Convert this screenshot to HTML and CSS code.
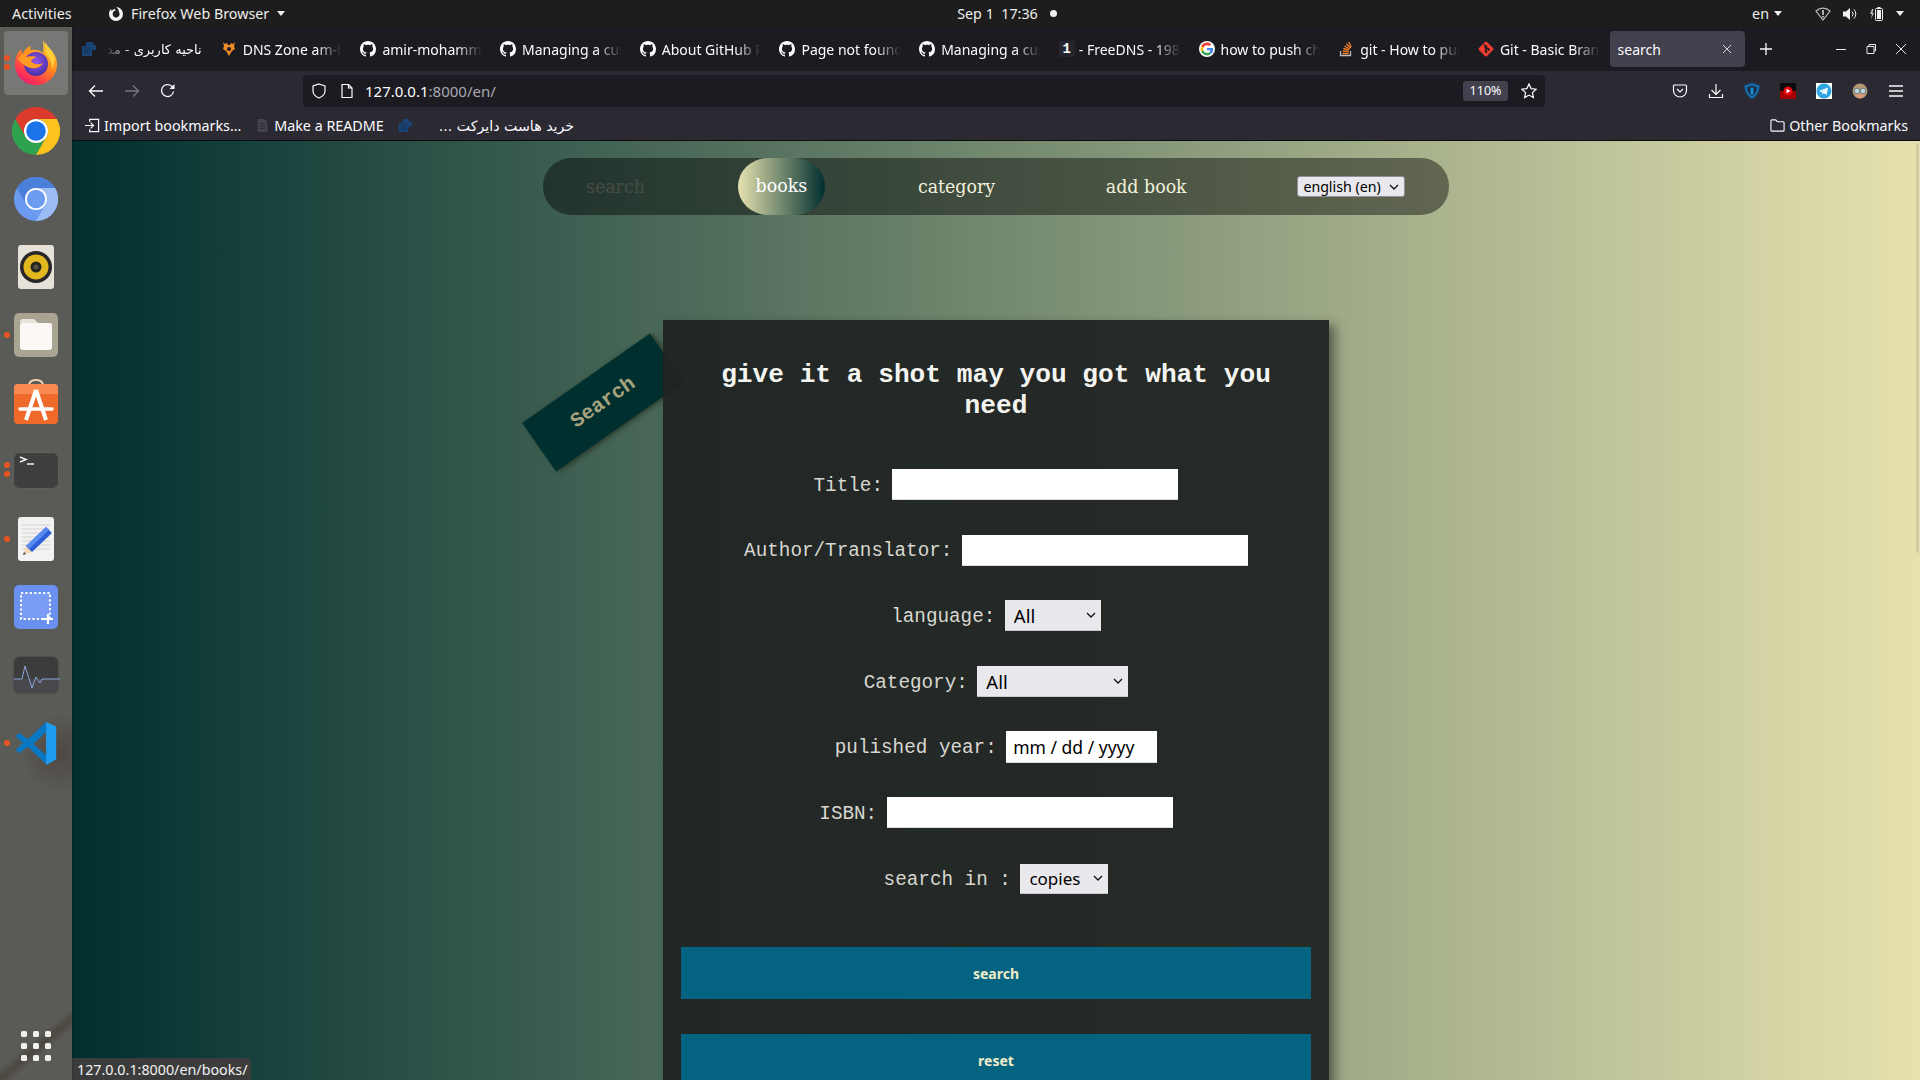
FILE: index.html
```html
<!DOCTYPE html>
<html lang="en">
<head>
<meta charset="utf-8">
<title>search</title>
<link rel="stylesheet" href="styles.css">
</head>
<body>
<svg class="defs" width="0" height="0" aria-hidden="true">
  <symbol id="gh" viewBox="0 0 16 16"><path fill="#fbfbfe" d="M8 0C3.58 0 0 3.58 0 8c0 3.54 2.29 6.53 5.47 7.59.4.07.55-.17.55-.38 0-.19-.01-.82-.01-1.49-2.01.37-2.53-.49-2.69-.94-.09-.23-.48-.94-.82-1.13-.28-.15-.68-.52-.01-.53.63-.01 1.08.58 1.23.82.72 1.21 1.87.87 2.33.66.07-.52.28-.87.51-1.07-1.78-.2-3.64-.89-3.64-3.95 0-.87.31-1.59.82-2.15-.08-.2-.36-1.02.08-2.12 0 0 .67-.21 2.2.82.64-.18 1.32-.27 2-.27.68 0 1.36.09 2 .27 1.53-1.04 2.2-.82 2.2-.82.44 1.1.16 1.92.08 2.12.51.56.82 1.27.82 2.15 0 3.07-1.87 3.75-3.65 3.95.29.25.54.73.54 1.48 0 1.07-.01 1.93-.01 2.2 0 .21.15.46.55.38A8.013 8.013 0 0016 8c0-4.42-3.58-8-8-8z"/></symbol>
  <symbol id="bluedoc" viewBox="0 0 16 16"><path fill="#1a4474" d="M5 1h7v3h3v5h-4v6H1V5h4z"/><path stroke="#0f2f55" stroke-width="1" d="M3 7h6M3 9.500h6M3 12h6"/></symbol>
</svg>

<div class="desktop">
  <header class="topbar">
    <div class="top-left">
      <span class="activities">Activities</span>
      <span class="app-menu">
        <svg class="ico16" viewBox="0 0 16 16"><path fill="#f4f4f4" d="M8 1a7 7 0 1 1-7 7c0-2 .8-3.700 2-5l.5 2C5 3.500 6 3 7 2.500 6.500 3.500 7 4 8 4.500a3.500 3.500 0 1 0 3 1.500C10.500 3.500 9.500 2 8 1z"/></svg>
        Firefox Web Browser <i class="caret"></i>
      </span>
    </div>
    <div class="top-center">Sep 1&nbsp; 17:36 <i class="rec-dot"></i></div>
    <div class="top-right">
      <span class="lang">en <i class="caret"></i></span>
      <svg class="ico16 wifi" viewBox="0 0 16 16"><path fill="none" stroke="#bbb" stroke-width="1.200" d="M1 5a10 10 0 0 1 14 0L8 14z"/><path fill="#eee" d="M7.300 4h1.400v5H7.300zM7.300 10h1.400v1.400H7.300z"/></svg>
      <svg class="ico16" viewBox="0 0 16 16"><path fill="#f2f2f2" d="M1 5.500h3L8 2v12L4 10.500H1z"/><path fill="none" stroke="#f2f2f2" d="M10 5.500a3.500 3.500 0 0 1 0 5M12 3.500a6.500 6.500 0 0 1 0 9"/></svg>
      <svg class="ico16" viewBox="0 0 16 16"><path fill="#bbb" d="M3 3 1 8h2l-1 5 3-6H3.500l1-4z"/><rect x="6.500" y="2.500" width="7" height="12" rx="1" fill="none" stroke="#f2f2f2"/><rect x="8.500" y="1" width="3" height="1.500" fill="#f2f2f2"/><rect x="8" y="4" width="4" height="9" fill="#f2f2f2"/></svg>
      <i class="caret"></i>
    </div>
  </header>

  <aside class="dock">
    <div class="dock-item dock-active">
      <i class="pip pip-a"></i><i class="pip pip-b"></i>
      <svg class="dock-ico" viewBox="0 0 48 48">
        <defs>
          <linearGradient id="fxa" x1="0.800" y1="0" x2="0.200" y2="1"><stop offset="0" stop-color="#ffd83a"/><stop offset=".45" stop-color="#ff8a1e"/><stop offset=".8" stop-color="#ff3750"/><stop offset="1" stop-color="#e3147c"/></linearGradient>
          <radialGradient id="fxb" cx=".5" cy=".4" r=".6"><stop offset="0" stop-color="#8d55e8"/><stop offset="1" stop-color="#4b2fa8"/></radialGradient>
        </defs>
        <path fill="url(#fxa)" d="M31 0c1 5 4 7 8 11 4 4 6 9 6 14 0 12-9 21-21 21S3 37 3 25c0-6 2-11 6-15 0 2 1 4 2 5 1-4 4-7 8-8-1 1-1 3 0 4 4-1 9 0 12 3 1-5 0-10 0-14z"/>
        <circle cx="24" cy="25" r="12" fill="url(#fxb)"/>
        <path fill="#ff9a24" d="M6 20c4-6 9-8 13-7-3 1-5 3-5 5 3-1 8-1 11 0-3 1-5 2-6 4 3 4 8 4 12 2-2 4-7 6-12 5-5-1-9-4-13-9z"/>
        <path fill="#ffcf3a" d="M33 3c2 4 6 7 8 11 2 5 2 11-1 16 0-7-2-12-6-15 0-4 0-8-1-12z"/>
      </svg>
    </div>
    <div class="dock-item">
      <svg class="dock-ico" viewBox="0 0 48 48">
        <path fill="#db3a2c" d="M24 0C15.100 0 7.400 4.800 3.200 12L13.600 30A12 12 0 0 1 24 12h20.800C40.600 4.800 32.900 0 24 0z"/>
        <path fill="#2fa24e" d="M3.200 12A24 24 0 0 0 24 48L34.400 30A12 12 0 0 1 13.600 30z"/>
        <path fill="#fcc31e" d="M44.800 12H24a12 12 0 0 1 10.400 18L24 48A24 24 0 0 0 44.800 12z"/>
        <circle cx="24" cy="24" r="12" fill="#fff"/><circle cx="24" cy="24" r="9.800" fill="#1a73e8"/>
      </svg>
    </div>
    <div class="dock-item">
      <svg class="dock-ico dock-ico-44" viewBox="0 0 48 48">
        <circle cx="24" cy="24" r="24" fill="#6a9bf0"/>
        <path fill="#4a7fdc" d="M24 0C15.100 0 7.400 4.800 3.200 12L13.600 30A12 12 0 0 1 24 12h20.800C40.600 4.800 32.900 0 24 0z"/>
        <path fill="#9cbcf6" d="M44.800 12H24a12 12 0 0 1 10.400 18L24 48A24 24 0 0 0 44.800 12z"/>
        <circle cx="24" cy="24" r="12" fill="#fff"/><circle cx="24" cy="24" r="10" fill="#6b9cf0"/>
      </svg>
    </div>
    <div class="dock-item">
      <svg class="dock-ico" viewBox="0 0 48 48">
        <rect x="6" y="2" width="36" height="44" rx="3" fill="#e6e2d8"/>
        <circle cx="24" cy="24" r="16" fill="#27262a"/><circle cx="24" cy="24" r="12.500" fill="#e3b81e"/><circle cx="24" cy="24" r="5.500" fill="#26241f"/><circle cx="24" cy="24" r="2.500" fill="#55503f"/>
      </svg>
    </div>
    <div class="dock-item">
      <i class="pip pip-c"></i>
      <svg class="dock-ico" viewBox="0 0 48 48">
        <rect x="2" y="2" width="44" height="44" rx="5" fill="#a9a392"/>
        <path fill="#e8e4dc" d="M8 11q0-3 3-3h11l4 4H8z"/>
        <path fill="#fbf8f5" d="M8 14q0-2 2-2h28q2 0 2 2v22q0 3-3 3H11q-3 0-3-3z"/>
      </svg>
    </div>
    <div class="dock-item">
      <svg class="dock-ico" viewBox="0 0 48 48">
        <path fill="none" stroke="#f6d4b8" stroke-width="2" d="M17 7q0-6 7-6t7 6v3"/>
        <rect x="2" y="5" width="44" height="40" rx="4" fill="#ef6a2a"/>
        <path fill="#f98a50" d="M2 9q0-4 4-4h36q4 0 4 4v6H2z"/>
        <path fill="none" stroke="#fff" stroke-width="4" d="M24 11 14 41M24 11l10 30"/>
        <path fill="none" stroke="#fff" stroke-width="3.500" stroke-linecap="round" d="M8 30h32"/>
      </svg>
    </div>
    <div class="dock-item">
      <i class="pip pip-a2"></i><i class="pip pip-b2"></i>
      <svg class="dock-ico" viewBox="0 0 48 48">
        <rect x="1.500" y="5.500" width="45" height="36" rx="6" fill="#413f3e" stroke="#606060"/>
        <path fill="none" stroke="#f1f1f1" stroke-width="1.500" d="M8 10l6 2.500L8 15M15 17h7"/>
      </svg>
    </div>
    <div class="dock-item">
      <i class="pip pip-c"></i>
      <svg class="dock-ico" viewBox="0 0 48 48">
        <rect x="6" y="2" width="36" height="44" rx="3" fill="#f2f2f2"/>
        <path stroke="#d2d2d2" d="M10 10h28M10 14h28M10 18h28M10 22h28M10 26h28M10 30h28M10 34h28"/>
        <path fill="#f4d9b8" d="M11 40l3-9 6 6z"/><path fill="#444" d="M11 40l1-3 2 2z"/>
        <path fill="#2c5fd8" d="M14 31 34 12l6 6-20 19z"/><path fill="#5b8af0" d="M14 31 34 12l3 3-20 19z"/>
      </svg>
    </div>
    <div class="dock-item">
      <svg class="dock-ico" viewBox="0 0 48 48">
        <rect x="2" y="2" width="44" height="44" rx="5" fill="#6a90f0"/>
        <rect x="9" y="10" width="29" height="26" fill="#7a9cf5" stroke="#fff" stroke-width="2" stroke-dasharray="2.200 2.200"/>
        <path stroke="#fff" stroke-width="2.200" d="M31 36h10M36 31v10"/>
      </svg>
    </div>
    <div class="dock-item">
      <svg class="dock-ico" viewBox="0 0 48 48">
        <rect x="1.500" y="5.500" width="45" height="37" rx="6" fill="#3c3c3c" stroke="#4f4f4f"/>
        <path fill="#47474c" d="M2 28h44v9q0 5-5 5H7q-5 0-5-5z"/>
        <path fill="none" stroke="#8ca6dc" stroke-width="1" d="M2 28h8l3-13 7 22 4-11 4 6 2-4h18"/>
      </svg>
    </div>
    <div class="dock-item">
      <i class="pip pip-c"></i>
      <svg class="dock-ico dock-ico-44" viewBox="0 0 48 48">
        <path fill="#0a77c2" d="M35 1 15 20 6 13 2 16v1l8 7-8 7v1l4 3 9-7 20 19 0-10-14-12L35 12z"/>
        <path fill="#1f9cf0" d="M35 1l11 5v36l-11 6z"/>
      </svg>
    </div>
    <div class="dock-apps">
      <i></i><i></i><i></i><i></i><i></i><i></i><i></i><i></i><i></i>
    </div>
  </aside>

  <main class="browser">
    <div class="tabstrip">
      <div class="tab"><svg class="ico16"><use href="#bluedoc"/></svg><span class="tab-title tab-rtl" dir="rtl">ناحیه کاربری - مدیریت هاست</span></div>
      <div class="tab">
        <svg class="ico16" viewBox="0 0 16 16"><path fill="#f08a24" d="M2 1l2 2 2-1 1 2h2l1-2 2 1 2-2-1 4 1 3-3 2-3 5-3-5-3-2 1-3z"/><circle cx="8" cy="8" r="2" fill="#1c1b22"/></svg>
        <span class="tab-title">DNS Zone am-h.ir</span></div>
      <div class="tab"><svg class="ico16"><use href="#gh"/></svg><span class="tab-title">amir-mohammad</span></div>
      <div class="tab"><svg class="ico16"><use href="#gh"/></svg><span class="tab-title">Managing a custom</span></div>
      <div class="tab"><svg class="ico16"><use href="#gh"/></svg><span class="tab-title">About GitHub Pages</span></div>
      <div class="tab"><svg class="ico16"><use href="#gh"/></svg><span class="tab-title">Page not found</span></div>
      <div class="tab"><svg class="ico16"><use href="#gh"/></svg><span class="tab-title">Managing a custom</span></div>
      <div class="tab tab-num"><span class="num-tile">1</span><span class="tab-title">- FreeDNS - 1984</span></div>
      <div class="tab">
        <svg class="ico16 g-ico" viewBox="-6 -6 60 60"><circle cx="24" cy="24" r="30" fill="#fff"/><path fill="#EA4335" d="M24 9.500c3.540 0 6.710 1.220 9.210 3.600l6.850-6.850C35.900 2.380 30.470 0 24 0 14.620 0 6.510 5.380 2.560 13.220l7.980 6.190C12.430 13.720 17.740 9.500 24 9.500z"/><path fill="#4285F4" d="M46.980 24.550c0-1.570-.15-3.090-.38-4.550H24v9.020h12.940c-.58 2.960-2.260 5.480-4.780 7.180l7.730 6c4.510-4.180 7.090-10.360 7.090-17.650z"/><path fill="#FBBC05" d="M10.530 28.590c-.48-1.450-.76-2.990-.76-4.590s.27-3.140.76-4.590l-7.980-6.190C.92 16.460 0 20.120 0 24c0 3.880.92 7.540 2.560 10.780l7.970-6.190z"/><path fill="#34A853" d="M24 48c6.480 0 11.930-2.130 15.890-5.810l-7.730-6c-2.150 1.450-4.920 2.300-8.160 2.300-6.260 0-11.570-4.220-13.470-9.910l-7.980 6.190C6.510 42.620 14.620 48 24 48z"/></svg>
        <span class="tab-title">how to push changes</span></div>
      <div class="tab">
        <svg class="ico16" viewBox="0 0 16 16"><path fill="none" stroke="#bcbbbb" stroke-width="1.300" d="M2.500 10v4.500h10V10"/><path fill="none" stroke="#f48024" stroke-width="1.300" d="M4.500 12.500h6M4.700 10l6 .6M5.300 7.500l5.800 1.600M6.500 5l5.200 3M8.400 2.800l4.200 4.300M10.800 1l2.400 5.300"/></svg>
        <span class="tab-title">git - How to push</span></div>
      <div class="tab">
        <svg class="ico16" viewBox="0 0 16 16"><rect x="2.300" y="2.300" width="11.400" height="11.400" rx="1.500" fill="#f03c2e" transform="rotate(45 8 8)"/><path stroke="#1c1b22" stroke-width="1.200" d="M6 3.500 8 5.500v5M8 6l2.500 2.500"/><circle cx="8" cy="5.800" r="1.200" fill="#1c1b22"/><circle cx="8" cy="10.800" r="1.200" fill="#1c1b22"/><circle cx="10.500" cy="8.500" r="1.200" fill="#1c1b22"/></svg>
        <span class="tab-title">Git - Basic Branching</span></div>
      <div class="tab tab-active"><span class="active-title">search</span>
        <svg class="tab-x" viewBox="0 0 10 10"><path stroke="#d8d8dc" stroke-width="1" d="M1 1l8 8M9 1l-8 8"/></svg></div>
      <svg class="new-tab" viewBox="0 0 12 12"><path stroke="#fbfbfe" stroke-width="1.300" d="M6 0v12M0 6h12"/></svg>
      <div class="win-ctrls">
        <svg class="ico12" viewBox="0 0 12 12"><path stroke="#e8e8e8" d="M1 6.500h10"/></svg>
        <svg class="ico12" viewBox="0 0 12 12"><path fill="none" stroke="#e8e8e8" d="M2 3.500h7v7H2zM4 3.500V1.500h6.500V8H9"/></svg>
        <svg class="ico12" viewBox="0 0 12 12"><path stroke="#e8e8e8" d="M1 1l10 10M11 1L1 11"/></svg>
      </div>
    </div>

    <div class="toolbar">
      <div class="nav-btns">
        <svg class="ico16" viewBox="0 0 16 16"><path fill="none" stroke="#fbfbfe" stroke-width="1.300" d="M15 8H1.500M7 2.500 1.500 8 7 13.500"/></svg>
        <svg class="ico16" viewBox="0 0 16 16"><path fill="none" stroke="#77767c" stroke-width="1.300" d="M1 8h13.500M9 2.500 14.500 8 9 13.500"/></svg>
        <svg class="ico16" viewBox="0 0 16 16"><path fill="none" stroke="#fbfbfe" stroke-width="1.300" d="M13.500 8.500A6 6 0 1 1 11.500 3l2.500 2"/><path fill="#fbfbfe" d="M14.500 1v5h-5z"/></svg>
      </div>
      <div class="urlbar">
        <svg class="ico16" viewBox="0 0 16 16"><path fill="none" stroke="#fbfbfe" stroke-width="1.200" d="M8 1l6 2v5c0 3-2.500 5.500-6 7-3.500-1.500-6-4-6-7V3z"/></svg>
        <svg class="ico16" viewBox="0 0 16 16"><path fill="none" stroke="#fbfbfe" stroke-width="1.200" d="M3 1.500h6.500L13 5v9.500H3zM9.500 1.500V5H13"/></svg>
        <span class="url"><b>127.0.0.1</b>:8000/en/</span>
        <span class="zoom-badge">110%</span>
        <svg class="ico16 star" viewBox="0 0 16 16"><path fill="none" stroke="#fbfbfe" stroke-width="1.200" d="M8 1l2.100 4.600 5 .6-3.700 3.400 1 5L8 12.100l-4.400 2.500 1-5L.9 6.200l5-.6z"/></svg>
      </div>
      <div class="tool-icons">
        <svg class="ico16" viewBox="0 0 16 16"><path fill="none" stroke="#fbfbfe" stroke-width="1.200" d="M2.500 2h11q1 0 1 1v4.500a6.500 6.500 0 0 1-13 0V3q0-1 1-1zM5 6l3 3 3-3"/></svg>
        <svg class="ico16" viewBox="0 0 16 16"><path fill="none" stroke="#fbfbfe" stroke-width="1.200" d="M8 1v10M3.500 7 8 11.500 12.500 7M1.500 11v3.500h13V11"/></svg>
        <svg class="ico16 ico-big" viewBox="0 0 16 16"><path fill="#1070b0" d="M8 0l7.500 2.500C15.500 8 13 13 8 16 3 13 .5 8 .5 2.500z"/><path fill="#1c3048" d="M8 2.500l5 1.700C13 8 11 11.500 8 13.500 5 11.500 3 8 3 4.200z"/><path fill="#1a86cc" d="M6.500 4.500h3V11L8 12.500 6.500 11z"/></svg>
        <svg class="ico16" viewBox="0 0 16 16"><rect width="16" height="16" rx="1" fill="#0b0b0b"/><path fill="#a30006" d="M0 8h16v7q0 1-1 1H1q-1 0-1-1z"/><circle cx="8" cy="8" r="4.500" fill="#e60914"/><path fill="#fff" d="M6.500 5.800 10.500 8l-4 2.200z"/></svg>
        <svg class="ico16" viewBox="0 0 16 16"><rect width="16" height="16" fill="#fff"/><circle cx="8" cy="8" r="7.500" fill="#2ca5e0"/><path fill="#fff" d="M3 8l9-3.500-1.500 7.500-2.800-2-1.400 1.400-.3-2.400L10.500 6 5 8.900z"/></svg>
        <svg class="ico16" viewBox="0 0 16 16"><circle cx="8" cy="8" r="7.500" fill="#b39a72"/><path fill="#d89a78" d="M3 9h10q0 6-5 6.500Q3 15 3 9z"/><circle cx="5" cy="8" r="2.800" fill="#bcd6de" stroke="#6c7c84"/><circle cx="11" cy="8" r="2.800" fill="#bcd6de" stroke="#6c7c84"/></svg>
        <svg class="ico16" viewBox="0 0 16 16"><path stroke="#fbfbfe" stroke-width="1.300" d="M1 3h14M1 8h14M1 13h14"/></svg>
      </div>
    </div>

    <div class="bookmarks">
      <span class="bm">
        <svg class="ico14" viewBox="0 0 16 16"><path fill="none" stroke="#fbfbfe" stroke-width="1.300" d="M5 4V1.500h9.500v13H5V12M0 8h9M6 5l3 3-3 3"/></svg>Import bookmarks…</span>
      <span class="bm">
        <svg class="ico14" viewBox="0 0 16 16"><path fill="#45444b" d="M3 1h7l3 3v11H3z"/><path stroke="#2b2a33" d="M5 6h6M5 8.500h6M5 11h6"/></svg>Make a README</span>
      <svg class="ico14" ><use href="#bluedoc"/></svg>
      <span class="bm bm-fa" dir="rtl">خرید هاست دایرکت ...</span>
      <span class="bm bm-other">
        <svg class="ico14" viewBox="0 0 16 16"><path fill="none" stroke="#fbfbfe" stroke-width="1.200" d="M1 3q0-1 1-1h4l2 2h6q1 0 1 1v8q0 1-1 1H2q-1 0-1-1z"/></svg>Other Bookmarks</span>
    </div>

    <div class="page">
      <nav class="site-nav">
        <a class="nav-link nav-dim">search</a>
        <a class="nav-link nav-current">books</a>
        <a class="nav-link">category</a>
        <a class="nav-link">add book</a>
        <select class="lang-select"><option>english (en)</option></select>
      </nav>

      <section class="card-wrap">
        <div class="ribbon">Search</div>
        <form class="card">
          <h1 class="card-title">give it a shot may you got what you need</h1>
          <div class="rows">
            <div class="row"><label class="row-label">Title:</label><input class="field" type="text"></div>
            <div class="row"><label class="row-label">Author/Translator:</label><input class="field" type="text"></div>
            <div class="row"><label class="row-label">language:</label><select class="pick pick-lang"><option>All</option></select></div>
            <div class="row"><label class="row-label">Category:</label><select class="pick pick-cat"><option>All</option></select></div>
            <div class="row"><label class="row-label">pulished year:</label><input class="field field-date" type="text" value="mm / dd / yyyy"></div>
            <div class="row"><label class="row-label">ISBN:</label><input class="field" type="text"></div>
            <div class="row"><label class="row-label">search in :</label><select class="pick pick-in"><option>copies</option></select></div>
          </div>
          <button class="action" type="button">search</button>
          <button class="action" type="button">reset</button>
        </form>
      </section>

      <div class="scroll-thumb"></div>
      <div class="status">127.0.0.1:8000/en/books/</div>
    </div>
  </main>
</div>
</body>
</html>
```
FILE: styles.css
```css
* { box-sizing: border-box; }
html, body { margin: 0; height: 100%; overflow: hidden; }
body { font-family: "Noto Sans", "DejaVu Sans", sans-serif; background: #111; }
.defs { position: absolute; }

.desktop {
  width: 1920px; height: 1080px;
  display: grid;
  grid-template-columns: 72px 1fr;
  grid-template-rows: 27px 1fr;
}

/* top bar */
.topbar {
  grid-column: 1 / 3;
  background: #1d1d1d;
  color: #eeeeec;
  font-size: 14.300px;
  display: grid;
  grid-template-columns: 1fr auto 1fr;
  align-items: center;
  padding: 0 16px 0 12px;
}
.top-left { display: flex; align-items: center; }
.activities { width: 96px; }
.app-menu { display: flex; align-items: center; gap: 7px; white-space: nowrap; }
.top-center { display: flex; align-items: center; gap: 12px; padding-left: 102px; padding-right: 4px; }
.rec-dot { width: 7px; height: 7px; border-radius: 50%; background: #eee; }
.top-right { display: flex; align-items: center; justify-content: flex-end; gap: 11px; }
.lang { display: flex; align-items: center; gap: 5px; margin-right: 22px; }
.caret { display: inline-block; width: 0; height: 0; border: 4.500px solid transparent; border-top: 5px solid #eee; border-bottom: 0; }
.app-menu .caret { margin-left: 1px; }
.ico16 { width: 16px; height: 16px; flex: none; }
.ico14 { width: 15px; height: 15px; flex: none; }
.ico12 { width: 12px; height: 12px; flex: none; }

/* dock */
.dock {
  background:
    radial-gradient(40px 40px at 60px 726px, rgba(60,45,35,.4), transparent),
    linear-gradient(140deg, transparent 0 93.500%, rgba(60,48,35,.45) 94.500%, transparent 95.500%),
    #5a5a57;
  padding-top: 2px;
  display: flex;
  flex-direction: column;
  align-items: center;
  box-shadow: 1px 0 2px rgba(0,0,0,.2);
  z-index: 3;
}
.dock-item { position: relative; flex: none; width: 64px; height: 64px; margin: 2px 0; display: flex; align-items: center; justify-content: center; border-radius: 4px; }
.dock-active { background: #777775; }
.dock-ico { width: 48px; height: 48px; }
.dock-ico-44 { width: 44px; height: 44px; }
.pip { position: absolute; left: 0; width: 6px; height: 6px; border-radius: 50%; background: #e95420; }
.pip-a { top: 24px; }
.pip-b { top: 33px; }
.pip-a2 { top: 23px; }
.pip-b2 { top: 32px; }
.pip-c { top: 29px; }
.dock-apps { margin-top: auto; margin-bottom: 19px; display: grid; grid-template-columns: repeat(3, 6px); gap: 6px; }
.dock-apps i { width: 6px; height: 6px; border-radius: 1.500px; background: #f0f0ee; }

/* browser chrome */
.browser { display: flex; flex-direction: column; min-width: 0; min-height: 0; }
.tabstrip { height: 44px; flex: none; background: #1c1b22; display: flex; align-items: center; padding-left: 1px; color: #fbfbfe; font-size: 14px; }
.tab { width: 139.700px; flex: none; height: 36px; padding: 0 8px; display: flex; align-items: center; gap: 6px; }
.tab-title { flex: 1; min-width: 0; overflow: hidden; white-space: nowrap; -webkit-mask-image: linear-gradient(to right, #000 72%, transparent 98%); mask-image: linear-gradient(to right, #000 72%, transparent 98%); }
.tab-rtl { font-family: "DejaVu Sans", sans-serif; font-size: 13px; padding-right: 3px; -webkit-mask-image: linear-gradient(to left, #000 72%, transparent 98%); mask-image: linear-gradient(to left, #000 72%, transparent 98%); }
.tab-num { gap: 4px; }
.num-tile { width: 16px; height: 16px; background: #26252b; font: bold 14px/16px "Liberation Mono", monospace; text-align: center; flex: none; }
.tab-active { width: 135px; background: #42414d; border-radius: 4px; justify-content: space-between; padding-right: 13px; }
.tab-x { width: 10px; height: 10px; }
.new-tab { width: 12px; height: 12px; margin-left: 15px; flex: none; }
.win-ctrls { margin-left: auto; display: flex; gap: 18px; padding-right: 13px; }

.toolbar { height: 36px; flex: none; background: #2b2a33; display: flex; align-items: flex-end; color: #fbfbfe; }
.nav-btns { width: 231px; flex: none; height: 32px; display: flex; align-items: center; gap: 20px; padding-left: 16px; }
.urlbar { width: 1242px; flex: none; height: 32px; background: #1c1b22; border-radius: 4px; display: flex; align-items: center; padding: 0 8px; gap: 12px; font-size: 15px; }
.url { color: #a9a9b0; flex: 1; margin-left: -2px; }
.url b { color: #fbfbfe; font-weight: 400; }
.zoom-badge { width: 45px; height: 20px; line-height: 20px; text-align: center; background: #42414d; border-radius: 3px; font-size: 12.500px; margin-right: 1px; }
.tool-icons { flex: 1; height: 32px; display: flex; align-items: center; justify-content: space-between; padding: 0 16px 0 127px; }

.bookmarks { height: 34px; flex: none; background: #2b2a33; border-bottom: 1px solid #0c0c0d; display: flex; align-items: center; padding: 4px 0 0 13px; color: #fbfbfe; font-size: 14.300px; }
.bm { display: flex; align-items: center; gap: 4px; white-space: nowrap; }
.bm + .bm { margin-left: 14px; }
.bm + .ico14 { margin-left: 14px; }
.ico14 + .bm-fa { margin-left: 26px; font-family: "DejaVu Sans", sans-serif; font-size: 14.200px; }
.bm-other { margin-left: auto !important; padding-right: 12px; }

/* web page */
.page {
  flex: 1; min-height: 0;
  position: relative;
  overflow: hidden;
  background: linear-gradient(to right, #002f2f, #e6e2af);
  padding-top: 17px;
}
.site-nav {
  width: 906px; height: 57px; margin: 0 auto;
  background: rgba(0,0,0,.43);
  border-radius: 28px;
  padding: 0 25px;
  display: flex;
  align-items: center;
  gap: 74.700px;
  font-family: "DejaVu Serif", serif;
  font-stretch: condensed;
  font-size: 19.360px;
}
.nav-link { color: #f3f1dc; padding: 0 18px; white-space: nowrap; }
.nav-dim { color: #474a46; }
.nav-current {
  height: 57px; line-height: 55px;
  color: #fff;
  background: linear-gradient(to right, #e6e2af, #002f2f);
  border-radius: 36px / 34px;
}
.lang-select, .pick {
  -webkit-appearance: none;
  appearance: none;
  background-image: url("data:image/svg+xml,%3Csvg xmlns='http://www.w3.org/2000/svg' width='10' height='6'%3E%3Cpath d='M1 1l4 4 4-4' fill='none' stroke='%23111' stroke-width='1.300'/%3E%3C/svg%3E");
  background-repeat: no-repeat;
  background-position: right 5px center;
  background-color: #e9e8ed;
  color: #000;
}
.lang-select {
  width: 108px; height: 21px;
  margin-left: 18px;
  border: 1px solid #8f8f9d; border-radius: 3px;
  font: 14.200px "Noto Sans", sans-serif;
  padding: 0 0 0 5px;
}

.card-wrap { position: relative; width: 666px; margin: 105px auto 0; }
.ribbon {
  position: absolute;
  left: -138.500px; top: 52.500px;
  width: 156px; height: 59px;
  text-align: center;
  background: #002f2f;
  color: #a7a37e;
  font: bold 20.500px/59px "Liberation Mono", monospace;
  transform: rotate(-35deg);
  box-shadow: 2px 2px 5px rgba(20,20,10,.55);
}
.card {
  position: relative;
  padding: 40px 18px 40px;
  background: rgba(32,36,35,.95);
  box-shadow: 6px 5px 10px rgba(0,0,0,.45);
}
.card-title {
  margin: 0 0 48px;
  padding: 0 10px;
  font: bold 26.180px/30.600px "Liberation Mono", monospace;
  color: #f4f4f0;
  text-align: center;
}
.rows { display: flex; flex-direction: column; gap: 34.650px; margin-bottom: 53px; }
.row { height: 31px; display: flex; align-items: center; justify-content: center; gap: 9.500px; }
.row-label { font: 19.300px "Liberation Mono", monospace; color: #d8d7d0; white-space: nowrap; padding-top: 2px; }
.field {
  width: 286px; height: 31px;
  border: 0; border-bottom: 1px solid #dcdcdc; border-radius: 0;
  background: #fff; color: #000;
  padding: 0 7px;
  font: 17.500px "Noto Sans", sans-serif;
  outline: none;
}
.field-date { width: 151px; height: 32px; }
.pick {
  height: 31px;
  border: 0; border-bottom: 1px solid #c9c9c9; border-radius: 0;
  font: 18.500px "Noto Sans", sans-serif;
  padding: 0 0 0 9px;
}
.pick-lang { width: 96px; }
.pick-cat { width: 151px; }
.pick-in { width: 88px; height: 30px; font-size: 17px; }
.action {
  display: block; width: 100%; height: 52px;
  margin-bottom: 35px;
  border: 0;
  background: #046380;
  color: #efecca;
  font: bold 14px "Noto Sans", sans-serif;
}
.scroll-thumb { position: absolute; right: 1px; top: 2px; width: 3px; height: 410px; background: #cfcba2; border-radius: 2px; }
.status {
  position: absolute; left: 0; bottom: 0;
  height: 22px; width: 179px;
  background: #3c3c3c;
  color: #f2f2f2;
  font-size: 14.300px; line-height: 23px;
  padding: 0 5px;
  white-space: nowrap;
  border-top-right-radius: 4px;
}
```
